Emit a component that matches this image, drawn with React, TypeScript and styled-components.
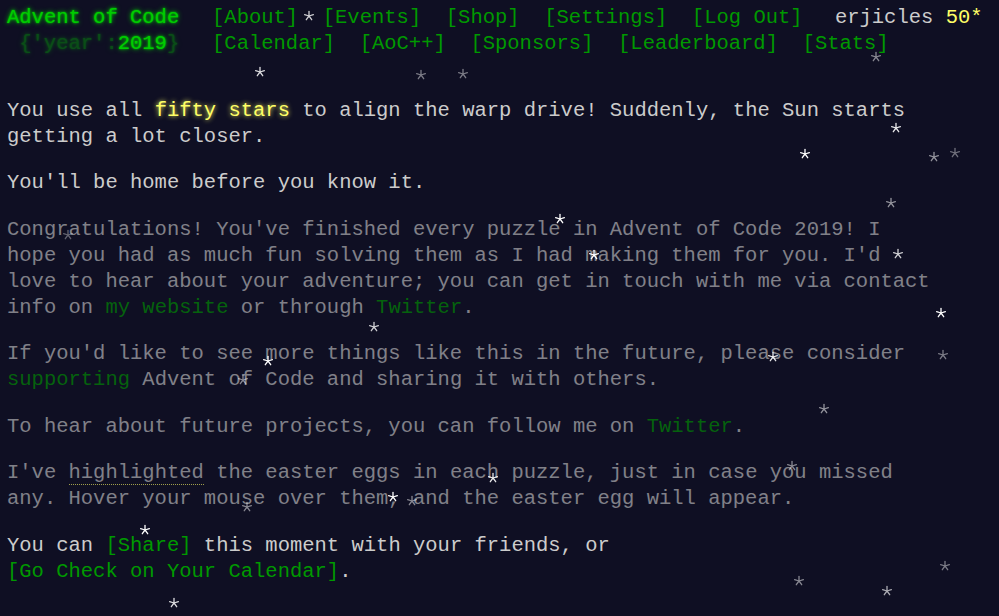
import React from 'react'
import styled, { createGlobalStyle } from 'styled-components'

const GlobalStyle = createGlobalStyle`
  html, body {
    margin: 0;
    padding: 0;
    background: #0f0f23;
  }
  body {
    color: #cccccc;
    font-family: "Liberation Mono", "DejaVu Sans Mono", monospace;
    font-size: 20.5px;
    line-height: 26px;
  }
`

const Page = styled.div`
  position: relative;
  min-height: 616px;
  padding: 4.5px 0 0 7px;
  box-sizing: border-box;
  overflow: hidden;
`

const Header = styled.header`
  white-space: nowrap;
  margin-bottom: 41px;
`

const HeaderRow = styled.div`
  display: flex;
  align-items: baseline;
`

const Title = styled.h1`
  margin: 0 1em 0 0;
  width: 14ch;
  flex: none;
  text-align: right;
  font-size: 1em;
  font-weight: normal;
  color: #00cc00;
  text-shadow: 0 0 2px #00cc00, 0 0 5px #00cc00;
`

const TitleWrap = styled.span`
  opacity: 0.33;
  white-space: pre;
`

const Nav = styled.ul`
  display: flex;
  margin: 0;
  padding: 0;
  list-style: none;
`

const NavItem = styled.li`
  padding: 0 0.6em;
`

const NavLink = styled.a`
  color: #009900;
  text-decoration: none;
`

const User = styled.div`
  margin-left: 20px;
  color: #cccccc;
`

const StarCount = styled.span`
  color: #ffff66;
`

const Article = styled.main`
  width: 928px;
`

const Para = styled.p<{ $quiet?: boolean }>`
  margin: 0 0 20.5px;
  opacity: ${({ $quiet }) => ($quiet ? 0.6 : 1)};
`

const Link = styled.a`
  color: #009900;
  text-decoration: none;
  white-space: nowrap;
`

const Star = styled.em`
  font-style: normal;
  color: #ffff66;
  text-shadow: 0 0 5px #ffff66;
`

const Egg = styled.span`
  border-bottom: 1px dotted #ffff66;
`

const Sky = styled.div`
  position: absolute;
  inset: 0;
  pointer-events: none;
`

const Twinkle = styled.svg`
  position: absolute;
  width: 12px;
  height: 12px;
  overflow: visible;
`

// [x, y, brightness]
const STARS: [number, number, number][] = [
  [309, 16, 0.8], [876, 57, 0.5], [260, 72, 0.85], [421, 75, 0.45], [463, 74, 0.45],
  [896, 128, 0.9], [805, 154, 1], [934, 157, 0.55], [955, 153, 0.4], [891, 203, 0.55],
  [560, 219, 1], [68, 235, 0.35], [594, 255, 1], [898, 254, 0.8], [941, 313, 1],
  [374, 327, 0.8], [268, 361, 1], [243, 380, 0.5], [773, 357, 0.9], [943, 355, 0.45],
  [824, 409, 0.55], [792, 466, 0.5], [493, 478, 0.9], [393, 497, 1], [412, 501, 0.5],
  [247, 507, 0.5], [145, 530, 1], [174, 603, 0.85], [945, 566, 0.45], [799, 581, 0.5],
  [887, 591, 0.65],
]

const SPOKES = [-90, -18, 54, 126, 198].map((deg) => {
  const r = (deg * Math.PI) / 180
  return [6 + Math.cos(r) * 4.6, 6 + Math.sin(r) * 4.6]
})

function SkyStar({ x, y, o }: { x: number; y: number; o: number }) {
  return (
    <Twinkle viewBox="0 0 12 12" style={{ left: x - 6, top: y - 6, opacity: o }}>
      {SPOKES.map(([sx, sy], i) => (
        <line key={i} x1={6} y1={6} x2={sx} y2={sy} stroke="#ffffff" strokeWidth={1.3} strokeLinecap="round" />
      ))}
    </Twinkle>
  )
}

const NAV_TOP = ['About', 'Events', 'Shop', 'Settings', 'Log Out']
const NAV_BOTTOM = ['Calendar', 'AoC++', 'Sponsors', 'Leaderboard', 'Stats']

export default function App() {
  return (
    <>
      <GlobalStyle />
      <Page>
        <Header>
          <HeaderRow>
            <Title>Advent of Code</Title>
            <Nav>
              {NAV_TOP.map((item) => (
                <NavItem key={item}>
                  <NavLink href="#">[{item}]</NavLink>
                </NavItem>
              ))}
            </Nav>
            <User>
              erjicles <StarCount>50*</StarCount>
            </User>
          </HeaderRow>
          <HeaderRow>
            <Title>
              <TitleWrap>{"{'year':"}</TitleWrap>2019<TitleWrap>{'}'}</TitleWrap>
            </Title>
            <Nav>
              {NAV_BOTTOM.map((item) => (
                <NavItem key={item}>
                  <NavLink href="#">[{item}]</NavLink>
                </NavItem>
              ))}
            </Nav>
          </HeaderRow>
        </Header>

        <Article>
          <Para>
            You use all <Star>fifty stars</Star> to align the warp drive! Suddenly, the Sun starts getting a lot
            closer.
          </Para>
          <Para>You'll be home before you know it.</Para>
          <Para $quiet>
            Congratulations! You've finished every puzzle in Advent of Code 2019! I hope you had as much fun solving
            them as I had making them for you. I'd love to hear about your adventure; you can get in touch with me via
            contact info on <Link href="#">my website</Link> or through <Link href="#">Twitter</Link>.
          </Para>
          <Para $quiet>
            If you'd like to see more things like this in the future, please consider{' '}
            <Link href="#">supporting</Link> Advent of Code and sharing it with others.
          </Para>
          <Para $quiet>
            To hear about future projects, you can follow me on <Link href="#">Twitter</Link>.
          </Para>
          <Para $quiet>
            I've <Egg title="Easter egg">highlighted</Egg> the easter eggs in each puzzle, just in case you missed
            any. Hover your mouse over them, and the easter egg will appear.
          </Para>
          <Para>
            You can <Link href="#">[Share]</Link> this moment with your friends, or{' '}
            <Link href="#">[Go Check on Your Calendar]</Link>.
          </Para>
        </Article>

        <Sky>
          {STARS.map(([x, y, o], i) => (
            <SkyStar key={i} x={x} y={y} o={o} />
          ))}
        </Sky>
      </Page>
    </>
  )
}
